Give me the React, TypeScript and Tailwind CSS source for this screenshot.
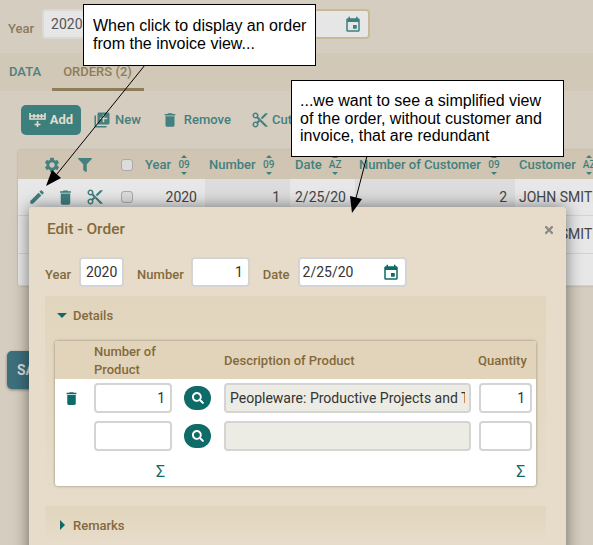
import {
  MdContentCut,
  MdDelete,
  MdEdit,
  MdEvent,
  MdLibraryAdd,
  MdSettings,
} from "react-icons/md";
import { FaFilter, FaSearch, FaTimes } from "react-icons/fa";

const columns = [
  { label: "Year", sort: "09", cell: "w-[65px] pl-[5px]" },
  { label: "Number", sort: "09", cell: "w-[85px] pl-[4px]" },
  { label: "Date", sort: "AZ", cell: "w-[65px] pl-[5px]" },
  { label: "Number of Customer", sort: "09", cell: "w-[160px] pl-[4px]" },
  { label: "Customer", sort: "AZ", cell: "w-[110px] pl-[4px]" },
];

const SortHint = ({ text }: { text: string }) => (
  <span className="relative ml-[7px] inline-block w-[12px] text-center text-[10px] font-medium leading-none text-[#3f7f7e]">
    <span className="absolute -top-[5px] left-[3px] h-0 w-0 border-x-[3px] border-b-[3px] border-x-transparent border-b-[#3f7f7e]" />
    {text}
    <span className="absolute -bottom-[5px] left-[3px] h-0 w-0 border-x-[3px] border-t-[3px] border-x-transparent border-t-[#3f7f7e]" />
  </span>
);

const AddIcon = () => (
  <svg width="17" height="15" viewBox="0 0 17 15" fill="none" stroke="#e4dccd" strokeWidth="1.6">
    <path d="M1 0v6h15V0M1 3h15M5 1v4M9 1v4M12.5 1v4M8.5 8v6M5.5 11.5h6" />
  </svg>
);

const Check = () => (
  <span className="block h-[12px] w-[12px] rounded-[3px] border border-[#aaa] bg-[#dcdcdc]" />
);

const Input = ({
  value,
  className,
}: {
  value?: string;
  className: string;
}) => (
  <div
    className={`flex h-[30px] shrink-0 items-center rounded-[4px] border-2 border-[#d4d4d4] px-[5px] text-[14px] font-normal text-[#333] ${className}`}
  >
    {value}
  </div>
);

const Row = ({ height, first, last }: { height: string; first?: boolean; last?: boolean }) => (
  <div className={`flex border-b border-[#d3d3d3] bg-[#e7e7e7] text-[14px] text-[#444] ${height}`}>
    <div className="flex w-[122px] shrink-0 items-center pl-[10px]">
      {first && (
        <div className="flex items-center text-[#3f7f7e]">
          <MdEdit size={18} className="shrink-0" />
          <MdDelete size={19} className="ml-[10px] shrink-0" />
          <MdContentCut size={18} className="ml-[11px] shrink-0" />
          <span className="ml-[17px]">
            <Check />
          </span>
        </div>
      )}
    </div>
    <div className="flex w-[65px] shrink-0 items-center justify-end pr-[8px]">{first && "2020"}</div>
    <div className="flex w-[85px] shrink-0 items-center justify-end bg-[#dcdcdc] pr-[10px]">
      {first && "1"}
    </div>
    <div className="flex w-[65px] shrink-0 items-center pl-[5px]">{first && "2/25/20"}</div>
    <div className="flex w-[160px] shrink-0 items-center justify-end bg-[#dcdcdc] pr-[8px]">
      {first && "2"}
    </div>
    <div className="flex w-[110px] shrink-0 items-center whitespace-nowrap pl-[4px]">
      {!last && "JOHN SMITH"}
    </div>
  </div>
);

const SearchButton = () => (
  <span className="ml-[12px] flex h-[24px] w-[27px] shrink-0 items-center justify-center rounded-full bg-[#0f6b68] text-white">
    <FaSearch size={12} />
  </span>
);

export default function App() {
  return (
    <div className="relative h-[545px] w-[593px] overflow-hidden bg-[#d5cdbf] font-['Roboto',sans-serif]">
      {/* Background page */}
      <div className="flex h-[53px] items-start pl-[8px] pt-[9px] text-[13px] font-medium text-[#8b7b5f]">
        <span className="mt-[10px]">Year</span>
        <div className="ml-[8px] flex h-[30px] w-[45px] items-center rounded-[4px] border-2 border-[#dcd9d2] bg-[#e6e6e6] pl-[7px] text-[14px] font-normal text-[#555]">
          2020
        </div>
        <span className="ml-[13px] mt-[10px]">Number</span>
        <div className="ml-[7px] h-[30px] w-[59px] rounded-[4px] bg-[#e6e6e6]" />
        <span className="ml-[13px] mt-[10px]">Date</span>
        <div className="ml-[8px] flex h-[30px] w-[109px] items-center justify-between rounded-[4px] border-2 border-[#c9b997] bg-[#e6e6e6] pl-[3px] pr-[6px] text-[14px] font-normal text-[#555]">
          2/25/20
          <MdEvent size={18} className="mt-[1px] text-[#3f7f7e]" />
        </div>
      </div>
      <div className="flex h-[38px] items-stretch bg-[#d1c8b7] pl-[9px] text-[13px] font-medium">
        <div className="flex items-center text-[#4b8180]">DATA</div>
        <div className="ml-[11px] flex items-center border-b-[3px] border-[#8f7c58] pl-[11px] pr-[12px] pt-[3px] text-[#8f7c58]">
          ORDERS (2)
        </div>
      </div>
      <div className="flex h-[59px] items-center pl-[21px] pb-[1px] text-[13px] font-medium text-[#43807f]">
        <div className="flex h-[30px] w-[60px] items-center justify-center gap-[4px] rounded-[5px] bg-[#3d7f7c] font-bold text-[#e4dccd]">
          <AddIcon />
          Add
        </div>
        <div className="ml-[12px] flex items-center gap-[4px]">
          <MdLibraryAdd size={18} />
          New
        </div>
        <div className="ml-[20px] flex items-center gap-[5px]">
          <MdDelete size={18} />
          Remove
        </div>
        <div className="ml-[20px] flex items-center gap-[3px]">
          <MdContentCut size={18} />
          Cut
        </div>
      </div>
      <div className="ml-[18px] w-[620px] overflow-hidden rounded-[3px] shadow-[0_0_2px_rgba(0,0,0,0.25)]">
        <div className="flex h-[29px] items-center bg-[#cfc5b2] text-[13px] font-medium text-[#43807f]">
          <div className="flex w-[122px] shrink-0 items-center pl-[25px]">
            <MdSettings size={18} className="shrink-0" />
            <FaFilter size={14} className="ml-[17px] shrink-0" />
            <span className="ml-[29px]">
              <Check />
            </span>
          </div>
          {columns.map((c) => (
            <div key={c.label} className={`flex shrink-0 items-center whitespace-nowrap ${c.cell}`}>
              {c.label}
              <SortHint text={c.sort} />
            </div>
          ))}
        </div>
        <Row height="h-[37px]" first />
        <Row height="h-[38px]" />
        <Row height="h-[32px]" last />
      </div>
      <div className="ml-[7px] mt-[65px] flex h-[38px] w-[60px] items-center rounded-[5px] bg-[#3d6f7d] pl-[10px] text-[14px] font-bold text-[#d9dcd8] shadow-[0_1px_3px_rgba(0,0,0,0.4)]">
        SAVE
      </div>

      {/* Edit dialog */}
      <div className="absolute left-[29px] top-[207px] h-[360px] w-[537px] rounded-[3px] bg-[#e7dcca] shadow-[0_0_16px_rgba(0,0,0,0.5)]">
        <div className="flex items-center justify-between pl-[18px] pr-[11px] pt-[11px]">
          <span className="text-[15.5px] font-medium text-[#836a3c]">Edit - Order</span>
          <FaTimes size={12} className="text-[#8a8a8a]" />
        </div>
        <div className="mt-[16px] flex items-center pl-[16px] text-[13px] font-medium text-[#836a3c]">
          <span className="mt-[5px]">Year</span>
          <Input value="2020" className="ml-[8px] w-[45px] justify-center bg-white" />
          <span className="ml-[13px] mt-[5px]">Number</span>
          <Input value="1" className="ml-[7px] w-[59px] justify-end bg-white" />
          <span className="ml-[13px] mt-[5px]">Date</span>
          <div className="ml-[8px] flex h-[30px] w-[109px] items-center justify-between rounded-[4px] border-2 border-[#d4d4d4] bg-white pl-[3px] pr-[5px] text-[14px] font-normal text-[#333]">
            2/25/20
            <MdEvent size={18} className="mt-[1px] text-[#0f6b68]" />
          </div>
        </div>
        <div className="ml-[16px] mt-[9px] w-[501px] bg-gradient-to-b from-[#e2d5bd] to-[#e7dcca] px-[10px] pb-[19px]">
          <div className="flex h-[45px] items-center pb-[6px] pl-[2px] text-[13px] font-medium text-[#836a3c]">
            <span className="mr-[6px] h-0 w-0 border-x-[5px] border-t-[5px] border-x-transparent border-t-[#0f6b68]" />
            Details
          </div>
          <div className="w-[481px] overflow-hidden rounded-[3px] bg-white shadow-[0_0_3px_rgba(0,0,0,0.4)]">
            <div className="flex h-[38px] items-center bg-[#e2d4ba] pt-[1px] text-[13px] font-medium leading-[18px] text-[#836a3c]">
              <span className="ml-[39px] w-[130px]">
                Number of
                <br />
                Product
              </span>
              <span className="w-[254px]">Description of Product</span>
              <span>Quantity</span>
            </div>
            <div className="flex h-[42px] items-center pb-[8px] pt-[4px]">
              <MdDelete size={17} className="ml-[8px] text-[#0f6b68]" />
              <Input value="1" className="ml-[14px] w-[78px] justify-end" />
              <SearchButton />
              <div className="ml-[13px] flex h-[30px] w-[247px] items-center rounded-[4px] border-2 border-[#d4d4d4] bg-[#ecebe4] px-[4px] text-[14px] text-[#333]">
                <span className="block overflow-hidden whitespace-nowrap">
                  Peopleware: Productive Projects and Teams
                </span>
              </div>
              <Input value="1" className="ml-[8px] w-[53px] justify-end" />
            </div>
            <div className="flex h-[38px] items-center pb-[8px] pl-[39px]">
              <Input className="w-[78px]" />
              <SearchButton />
              <div className="ml-[13px] h-[30px] w-[247px] rounded-[4px] border-2 border-[#d4d4d4] bg-[#ecebe4]" />
              <Input className="ml-[8px] w-[53px]" />
            </div>
            <div className="flex h-[27px] items-center pb-[2px] text-[16px] text-[#0f6b68]">
              <span className="ml-[101px]">Σ</span>
              <span className="ml-[351px]">Σ</span>
            </div>
          </div>
        </div>
        <div className="ml-[16px] mt-[1px] flex h-[38px] w-[501px] items-center bg-gradient-to-b from-[#e2d5bd] to-[#e7dcca] pl-[15px] text-[13px] font-medium text-[#836a3c]">
          <span className="mr-[8px] h-0 w-0 border-y-[5px] border-l-[5px] border-y-transparent border-l-[#0f6b68]" />
          Remarks
        </div>
      </div>

      {/* Annotations */}
      <svg className="absolute left-0 top-0" width="593" height="545" viewBox="0 0 593 545">
        <path d="M145 65L57 174" stroke="#000" strokeWidth="1" />
        <path d="M46 186L52 170L61 178Z" fill="#000" />
        <path d="M367 156L356 198" stroke="#000" strokeWidth="1" />
        <path d="M352 213L350 196L362 199Z" fill="#000" />
      </svg>
      <div className="absolute left-[83px] top-[4px] h-[62px] w-[233px] border border-black bg-white pl-[9px] pt-[12px] font-['Liberation_Sans',sans-serif] text-[16px] leading-[18px] text-black">
        When click to display an order
        <br />
        from the invoice view...
      </div>
      <div className="absolute left-[291px] top-[80px] h-[77px] w-[273px] border border-black bg-white pl-[8px] pt-[11px] font-['Liberation_Sans',sans-serif] text-[16px] leading-[17.5px] text-black">
        ...we want to see a simplified view
        <br />
        of the order, without customer and
        <br />
        invoice, that are redundant
      </div>
    </div>
  );
}
